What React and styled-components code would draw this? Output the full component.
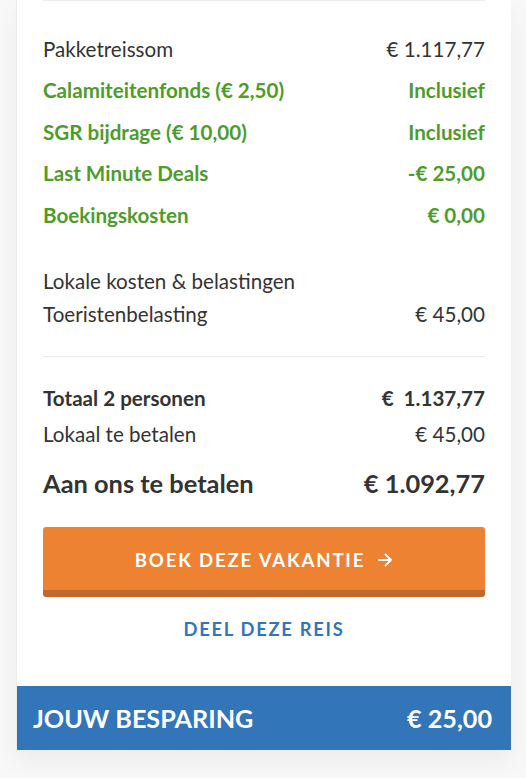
import React from "react";
import styled, { createGlobalStyle } from "styled-components";

const GlobalStyle = createGlobalStyle`
  html, body {
    margin: 0;
    padding: 0;
    background: #f8f8f8;
    font-family: Lato, "Open Sans", "Liberation Sans", sans-serif;
    color: #333;
  }
`;

const Page = styled.div`
  padding: 0 15px 28px 17px;
`;

const Card = styled.div`
  background: #fff;
  border-left: 1px solid #ececec;
  margin-left: -1px;
  box-shadow: 0 12px 24px rgba(0, 0, 0, 0.05);
`;

const Body = styled.div`
  padding: 0 26px 45px;
`;

const Divider = styled.div`
  height: 1px;
  background: #ececec;
`;

const Group = styled.div`
  padding-top: ${(p) => p.top || 0}px;
`;

const Row = styled.div`
  display: flex;
  justify-content: space-between;
  align-items: center;
  height: ${(p) => p.h || 41.5}px;
  font-size: ${(p) => (p.large ? 25.4 : 20.6)}px;
  font-weight: ${(p) => (p.bold || p.green ? 700 : 400)};
  color: ${(p) => (p.green ? "#4e9c2b" : "#333")};
  margin-top: ${(p) => p.mt || 0}px;
`;

const Value = styled.span`
  white-space: pre;
`;

const BookButton = styled.button`
  display: flex;
  align-items: center;
  justify-content: center;
  gap: 13px;
  width: 100%;
  height: 70px;
  margin-top: 26px;
  border: none;
  border-bottom: 7px solid #c1692b;
  border-radius: 3px;
  background: #ee8233;
  color: #fff;
  font-family: inherit;
  font-size: 18.6px;
  font-weight: 700;
  letter-spacing: 1.8px;
  padding: 0;
  padding-top: 3px;
  cursor: pointer;
`;

const ShareLink = styled.a`
  display: block;
  margin-top: 20px;
  line-height: 24px;
  text-align: center;
  color: #3375b9;
  font-size: 18.4px;
  font-weight: 700;
  letter-spacing: 1.7px;
  text-decoration: none;
`;

const Savings = styled.div`
  display: flex;
  justify-content: space-between;
  align-items: center;
  height: 64px;
  padding: 0 19px 0 16px;
  background: #3375b9;
  color: #fff;
  font-size: 25.2px;
  font-weight: 700;
`;

const Arrow = () => (
  <svg width="15" height="14" viewBox="0 0 15 14" fill="none">
    <path
      d="M1 7h12M7.5 1.5 13 7l-5.5 5.5"
      stroke="#fff"
      strokeWidth="2"
      strokeLinecap="round"
      strokeLinejoin="round"
    />
  </svg>
);

const costs = [
  { label: "Pakketreissom", value: "€ 1.117,77" },
  { label: "Calamiteitenfonds (€ 2,50)", value: "Inclusief", green: true },
  { label: "SGR bijdrage (€ 10,00)", value: "Inclusief", green: true },
  { label: "Last Minute Deals", value: "-€ 25,00", green: true },
  { label: "Boekingskosten", value: "€ 0,00", green: true },
];

export default function App() {
  return (
    <>
      <GlobalStyle />
      <Page>
        <Card>
          <Body>
            <Divider />
            <Group top={27}>
              {costs.map((c) => (
                <Row key={c.label} green={c.green}>
                  <span>{c.label}</span>
                  <Value>{c.value}</Value>
                </Row>
              ))}
            </Group>
            <Group top={29}>
              <Row h={33}>
                <span>Lokale kosten &amp; belastingen</span>
              </Row>
              <Row h={33}>
                <span>Toeristenbelasting</span>
                <Value>€ 45,00</Value>
              </Row>
            </Group>
            <Group top={25}>
              <Divider />
              <Row h={36} mt={23} bold>
                <span>Totaal 2 personen</span>
                <Value>{"€  1.137,77"}</Value>
              </Row>
              <Row h={36}>
                <span>Lokaal te betalen</span>
                <Value>€ 45,00</Value>
              </Row>
              <Row h={36} mt={13} large bold>
                <span>Aan ons te betalen</span>
                <Value>€ 1.092,77</Value>
              </Row>
            </Group>
            <BookButton>
              BOEK DEZE VAKANTIE <Arrow />
            </BookButton>
            <ShareLink href="#">DEEL DEZE REIS</ShareLink>
          </Body>
          <Savings>
            <span>JOUW BESPARING</span>
            <span>€ 25,00</span>
          </Savings>
        </Card>
      </Page>
    </>
  );
}
